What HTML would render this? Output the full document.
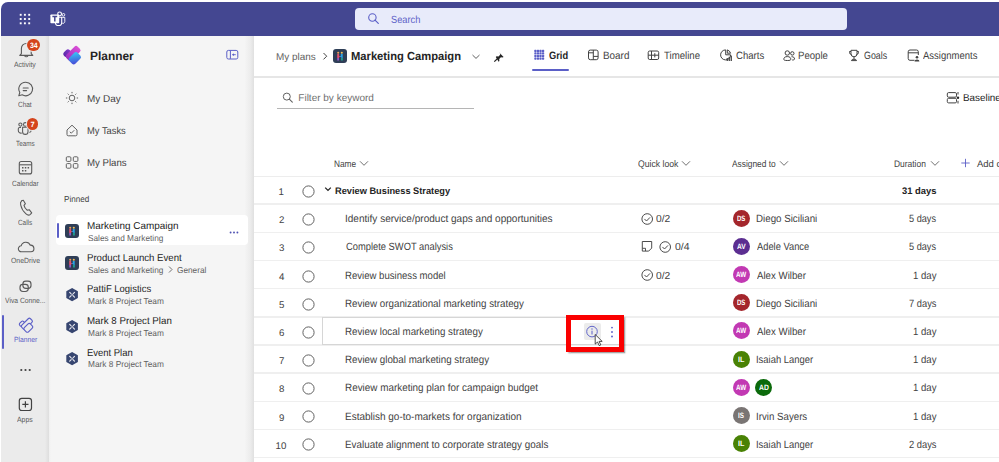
<!DOCTYPE html>
<html><head><meta charset="utf-8"><style>
html,body{margin:0;padding:0;}
body{width:999px;height:462px;position:relative;overflow:hidden;background:#ffffff;font-family:"Liberation Sans",sans-serif;}
.t{position:absolute;white-space:nowrap;line-height:1;transform-origin:0 0;text-rendering:geometricPrecision;}
svg{overflow:visible;}
</style></head><body>
<div style="position:absolute;left:1px;top:2px;width:998px;height:33.5px;background:#444791;border-top-left-radius:7px;"></div>
<svg style="position:absolute;left:0px;top:0px;" width="40" height="36" viewBox="0 0 40 36"><rect x="19.75" y="13.85" width="1.9" height="1.9" fill="#fff"/><rect x="19.75" y="18.05" width="1.9" height="1.9" fill="#fff"/><rect x="19.75" y="22.35" width="1.9" height="1.9" fill="#fff"/><rect x="23.95" y="13.85" width="1.9" height="1.9" fill="#fff"/><rect x="23.95" y="18.05" width="1.9" height="1.9" fill="#fff"/><rect x="23.95" y="22.35" width="1.9" height="1.9" fill="#fff"/><rect x="28.25" y="13.85" width="1.9" height="1.9" fill="#fff"/><rect x="28.25" y="18.05" width="1.9" height="1.9" fill="#fff"/><rect x="28.25" y="22.35" width="1.9" height="1.9" fill="#fff"/></svg>
<svg style="position:absolute;left:0px;top:0px;" width="70" height="36" viewBox="0 0 70 36"><circle cx="59.6" cy="13.9" r="1.9" fill="none" stroke="#fff" stroke-width="1.1"/><circle cx="63.5" cy="14.8" r="1.3" fill="none" stroke="#fff" stroke-width="0.9"/><path d="M62.2 17.4h2.6v4.2a1.8 1.8 0 0 1-2.6 1.6" fill="none" stroke="#fff" stroke-width="0.9"/><path d="M55.4 17.2h6.3v5.2a3.15 3.15 0 0 1-6.3 0z" fill="none" stroke="#fff" stroke-width="1.1"/><rect x="50.4" y="14.4" width="8.8" height="8.8" rx="0.8" fill="#fff"/><path d="M52.4 16.6h4.8M54.8 16.6v5" stroke="#444791" stroke-width="1.5"/></svg>
<div style="position:absolute;left:355px;top:7.5px;width:492px;height:22.5px;background:#e8ebfa;border-radius:4px;"></div>
<svg style="position:absolute;left:360px;top:8px;" width="30" height="22" viewBox="0 0 30 22"><circle cx="12.4" cy="9.5" r="3.7" fill="none" stroke="#5b5fc7" stroke-width="1.1"/><path d="M15 12.1l3.3 3.3" stroke="#5b5fc7" stroke-width="1.2" stroke-linecap="round"/></svg>
<div class="t" style="left:391.00px;top:15.88px;font-size:10.3px;color:#5b5fc7;transform:scaleX(0.900);">Search</div>
<div style="position:absolute;left:1px;top:35.5px;width:47px;height:427px;background:#ebebeb;"></div>
<div style="position:absolute;left:44.5px;top:35.5px;width:4px;height:427px;background:linear-gradient(90deg,#ebebeb,#dedede);"></div>
<div style="position:absolute;left:48.5px;top:35.5px;width:2.5px;height:427px;background:linear-gradient(90deg,#f0f0f0,#f5f5f5);"></div>
<div style="position:absolute;left:51px;top:35.5px;width:194px;height:427px;background:#f5f5f5;"></div>
<div style="position:absolute;left:245px;top:35.5px;width:9px;height:427px;background:linear-gradient(90deg,#f4f4f4,#ececec 60%,#e0e0e0);"></div>
<div style="position:absolute;left:254px;top:35.5px;width:745px;height:427px;background:#ffffff;"></div>
<svg style="position:absolute;left:14px;top:38px;" width="24" height="22" viewBox="0 0 24 22"><path d="M7.4 15.6V10.4a4.9 4.9 0 0 1 9.8 0v5.2l1.6 1.8H5.8z" fill="none" stroke="#5a5a5a" stroke-width="1.1" stroke-linejoin="round"/><path d="M10.6 17.6a1.8 1.8 0 0 0 3.4 0" fill="none" stroke="#5a5a5a" stroke-width="1.1"/></svg>
<div style="position:absolute;left:26.9px;top:39.4px;width:13.3px;height:11.8px;border-radius:6px;background:#d4441c;box-shadow:0 0 0 1px #ebebeb;"></div>
<div class="t" style="left:29.50px;top:42.40px;font-size:7.8px;color:#fff;font-weight:bold;transform:scaleX(0.889);">34</div>
<div class="t" style="left:14.20px;top:60.95px;font-size:7.5px;color:#5a5a5a;transform:scaleX(0.917);">Activity</div>
<svg style="position:absolute;left:14px;top:78px;" width="24" height="22" viewBox="0 0 24 22"><path d="M11.8 4.2a6.8 6.8 0 1 1-3.6 12.6l-3.4 1 1-3.3A6.8 6.8 0 0 1 11.8 4.2z" fill="none" stroke="#5a5a5a" stroke-width="1.1" stroke-linejoin="round"/><path d="M9.2 10h5M9.2 12.6h3.4" stroke="#5a5a5a" stroke-width="1.1" stroke-linecap="round"/></svg>
<div class="t" style="left:18.30px;top:101.05px;font-size:7.5px;color:#5a5a5a;transform:scaleX(0.863);">Chat</div>
<svg style="position:absolute;left:14px;top:115px;" width="24" height="22" viewBox="0 0 24 22"><g fill="none" stroke="#5a5a5a" stroke-width="1.05"><circle cx="6.4" cy="9.6" r="1.6"/><circle cx="11.3" cy="9.4" r="1.8"/><path d="M8.6 12.3h5.4v4.4a2.7 2.7 0 0 1-5.4 0z"/><path d="M7 12.4H5.6a1.3 1.3 0 0 0-1.3 1.3v1.8a2.6 2.6 0 0 0 3.4 2.5"/><path d="M15.4 17.6a2.4 2.4 0 0 0 1.8-2.3v-1.6"/></g></svg>
<div style="position:absolute;left:26.75px;top:118.25px;width:11.5px;height:11.5px;border-radius:50%;background:#d4441c;box-shadow:0 0 0 1px #ebebeb;"></div>
<div class="t" style="left:30.60px;top:120.85px;font-size:7.5px;color:#fff;font-weight:bold;">7</div>
<div class="t" style="left:15.90px;top:140.05px;font-size:7.5px;color:#5a5a5a;transform:scaleX(0.845);">Teams</div>
<svg style="position:absolute;left:14px;top:158px;" width="24" height="22" viewBox="0 0 24 22"><rect x="5.3" y="3.5" width="12.4" height="12.4" rx="2" fill="none" stroke="#5a5a5a" stroke-width="1.1"/><path d="M5.5 6.8h12" stroke="#5a5a5a" stroke-width="1.1"/><g fill="#5a5a5a"><rect x="8" y="9" width="1.5" height="1.5"/><rect x="10.8" y="9" width="1.5" height="1.5"/><rect x="13.6" y="9" width="1.5" height="1.5"/><rect x="8" y="12" width="1.5" height="1.5"/><rect x="10.8" y="12" width="1.5" height="1.5"/></g></svg>
<div class="t" style="left:11.60px;top:180.15px;font-size:7.5px;color:#5a5a5a;transform:scaleX(0.877);">Calendar</div>
<svg style="position:absolute;left:14px;top:198px;" width="24" height="22" viewBox="0 0 24 22"><path d="M7.5 2.8l1.8-.6 2.1 3.5-1.4 1.6c.4 1.8 1.7 3.8 3.3 5l1.9-.6 2.5 3.2-1.3 1.4c-1.2 1.1-3 .8-4.4-.4-2.7-2.4-4.6-5.6-5.3-8.9-.4-1.8.1-3.4.8-3.8z" fill="none" stroke="#5a5a5a" stroke-width="1.1" stroke-linejoin="round"/></svg>
<div class="t" style="left:17.95px;top:219.35px;font-size:7.5px;color:#5a5a5a;transform:scaleX(0.853);">Calls</div>
<svg style="position:absolute;left:14px;top:238px;" width="24" height="22" viewBox="0 0 24 22"><path d="M7.5 13.8a3 3 0 0 1-.3-6 4.8 4.8 0 0 1 9.1-.6 3.3 3.3 0 0 1 .6 6.6z" fill="none" stroke="#5a5a5a" stroke-width="1.1" stroke-linejoin="round"/></svg>
<div class="t" style="left:10.50px;top:257.05px;font-size:7.5px;color:#5a5a5a;transform:scaleX(0.919);">OneDrive</div>
<svg style="position:absolute;left:13px;top:275px;" width="25" height="22" viewBox="0 0 25 22"><g fill="none" stroke="#5a5a5a" stroke-width="1.15"><rect x="9.9" y="6.1" width="8.1" height="7.3" rx="2.9"/><rect x="7" y="9.4" width="8.3" height="7.1" rx="2.9"/></g></svg>
<div class="t" style="left:5.35px;top:297.35px;font-size:7.5px;color:#5a5a5a;transform:scaleX(0.902);">Viva Conne...</div>
<div style="position:absolute;left:2.4px;top:314.5px;width:2px;height:34px;background:#5b5fc7;border-radius:1px;"></div>
<svg style="position:absolute;left:0px;top:300px;" width="50" height="50" viewBox="0 0 50 50"><g transform="translate(17.9 24.3) scale(0.88) matrix(0.7071,-0.7071,0.7071,0.7071,0,0)"><rect x="0.65" y="0.65" width="6.2" height="4.2" rx="1.8" fill="#ebebeb" stroke="#5b5fc7" stroke-width="1.3"/><rect x="0.65" y="3.85" width="13.899999999999999" height="5.9" rx="1.8" fill="#ebebeb" stroke="#5b5fc7" stroke-width="1.3"/><rect x="0.65" y="7.8500000000000005" width="9.7" height="6.7" rx="1.8" fill="#ebebeb" stroke="#5b5fc7" stroke-width="1.3"/></g></svg>
<div class="t" style="left:13.50px;top:336.45px;font-size:7.5px;color:#5b5fc7;transform:scaleX(0.900);">Planner</div>
<svg style="position:absolute;left:14px;top:362px;" width="24" height="16" viewBox="0 0 24 16"><circle cx="7.3" cy="8" r="1.1" fill="#424242"/><circle cx="11.5" cy="8" r="1.1" fill="#424242"/><circle cx="15.7" cy="8" r="1.1" fill="#424242"/></svg>
<svg style="position:absolute;left:14px;top:393px;" width="24" height="22" viewBox="0 0 24 22"><rect x="5.3" y="5.3" width="12.2" height="12.2" rx="2.5" fill="none" stroke="#424242" stroke-width="1.2"/><path d="M11.4 8.3v6.2M8.3 11.4h6.2" stroke="#424242" stroke-width="1.2"/></svg>
<div class="t" style="left:17.40px;top:416.45px;font-size:7.5px;color:#5a5a5a;transform:scaleX(0.918);">Apps</div>
<svg style="position:absolute;left:0px;top:0px;" width="100" height="70" viewBox="0 0 100 70"><defs><linearGradient id="lg1" x1="0" y1="0" x2="1" y2="0"><stop offset="0" stop-color="#5a2aa6"/><stop offset="1" stop-color="#8238c9"/></linearGradient><linearGradient id="lg2" x1="0" y1="0" x2="1" y2="0"><stop offset="0" stop-color="#9a2fc0"/><stop offset="1" stop-color="#db4fd6"/></linearGradient><linearGradient id="lg3" x1="0" y1="1" x2="1" y2="0"><stop offset="0" stop-color="#4a3fd6"/><stop offset="1" stop-color="#34d0f6"/></linearGradient></defs><g transform="translate(62.3 54.0) scale(1.06) matrix(0.7071,-0.7071,0.7071,0.7071,0,0)"><rect x="0" y="0" width="7.5" height="5.5" rx="2.2" fill="url(#lg1)"/><rect x="0" y="3.2" width="15.2" height="7.2" rx="2.2" fill="url(#lg2)"/><rect x="0" y="7.2" width="11" height="8" rx="2.2" fill="url(#lg3)"/></g></svg>
<div class="t" style="left:89.70px;top:50.34px;font-size:12px;color:#242424;font-weight:bold;transform:scaleX(0.993);">Planner</div>
<svg style="position:absolute;left:224px;top:47px;" width="16" height="14" viewBox="0 0 16 14"><rect x="2.8" y="3.4" width="11" height="8.6" rx="1.6" fill="none" stroke="#5b5fc7" stroke-width="1"/><path d="M6.4 3.6v8.2" stroke="#5b5fc7" stroke-width="1"/><path d="M8.2 7.7h3.6" stroke="#5b5fc7" stroke-width="0.9"/><path d="M10 6.3l-1.8 1.4 1.8 1.4z" fill="#5b5fc7"/></svg>
<svg style="position:absolute;left:64px;top:90px;" width="16" height="16" viewBox="0 0 16 16"><circle cx="8" cy="8" r="2.8" fill="none" stroke="#616161" stroke-width="1"/><g stroke="#616161" stroke-width="1" stroke-linecap="round"><path d="M8 2.3v.6M8 13.1v.6M2.3 8h.6M13.1 8h.6M4 4l.4.4M11.6 11.6l.4.4M4 12l.4-.4M11.6 4.4l.4-.4"/></g></svg>
<div class="t" style="left:86.81px;top:94.73px;font-size:10px;color:#424242;transform:scaleX(0.994);">My Day</div>
<svg style="position:absolute;left:64px;top:122px;" width="16" height="16" viewBox="0 0 16 16"><path d="M3 8L8 3.2 13 8v4.5a1.3 1.3 0 0 1-1.3 1.3H4.3A1.3 1.3 0 0 1 3 12.5z" fill="none" stroke="#616161" stroke-width="1" stroke-linejoin="round"/><path d="M5.8 9.8l1.5 1.4 3-3" fill="none" stroke="#616161" stroke-width="1"/></svg>
<div class="t" style="left:86.87px;top:126.53px;font-size:10px;color:#424242;transform:scaleX(0.934);">My Tasks</div>
<svg style="position:absolute;left:64px;top:154px;" width="16" height="16" viewBox="0 0 16 16"><g fill="none" stroke="#616161" stroke-width="1"><rect x="2.3" y="2.8" width="4.6" height="4.6" rx="1"/><rect x="9.3" y="2.8" width="4.6" height="4.6" rx="1"/><rect x="2.3" y="9.6" width="4.6" height="4.6" rx="1"/><rect x="9.3" y="9.6" width="4.6" height="4.6" rx="1"/></g></svg>
<div class="t" style="left:86.84px;top:158.73px;font-size:10px;color:#424242;transform:scaleX(0.963);">My Plans</div>
<div class="t" style="left:63.80px;top:194.94px;font-size:8.7px;color:#424242;transform:scaleX(0.933);">Pinned</div>
<div style="position:absolute;left:55.5px;top:215.3px;width:192px;height:30.2px;background:#ffffff;border-radius:4px;"></div>
<div style="position:absolute;left:56.6px;top:223px;width:2.3px;height:14.7px;background:#5b5fc7;border-radius:1px;"></div>
<svg style="position:absolute;left:65px;top:224px;" width="14" height="14" viewBox="0 0 14 14"><rect x="0" y="0" width="14" height="14" rx="3" fill="#2f3e57"/><circle cx="5.2" cy="3.7" r="1.05" fill="#f2a15c"/><circle cx="8.8" cy="3.7" r="1.05" fill="#f2c05c"/><path d="M4.2 5.1h1.9v2.1h1.1v0.9H6.1v0.8H4.2z" fill="#e0506e"/><path d="M4.3 8.9h1.6v2.5H4.3z" fill="#9b5cd6"/><path d="M7.8 5.1h1.9v3.8H8.3V8.1H7V7.2h0.8z" fill="#2aa3e6"/><path d="M8.2 8.9h1.5v2.5H8.2z" fill="#1fb59a"/></svg>
<div class="t" style="left:86.81px;top:221.53px;font-size:10px;color:#242424;transform:scaleX(0.992);">Marketing Campaign</div>
<div class="t" style="left:87.80px;top:234.22px;font-size:8.6px;color:#616161;transform:scaleX(0.962);">Sales and Marketing</div>
<svg style="position:absolute;left:226px;top:228px;" width="16" height="8" viewBox="0 0 16 8"><circle cx="4.6" cy="4.5" r="0.95" fill="#4f52b2"/><circle cx="8" cy="4.5" r="0.95" fill="#4f52b2"/><circle cx="11.4" cy="4.5" r="0.95" fill="#4f52b2"/></svg>
<svg style="position:absolute;left:65px;top:256px;" width="14" height="14" viewBox="0 0 14 14"><rect x="0" y="0" width="14" height="14" rx="3" fill="#2f3e57"/><circle cx="5.2" cy="3.7" r="1.05" fill="#f2a15c"/><circle cx="8.8" cy="3.7" r="1.05" fill="#f2c05c"/><path d="M4.2 5.1h1.9v2.1h1.1v0.9H6.1v0.8H4.2z" fill="#e0506e"/><path d="M4.3 8.9h1.6v2.5H4.3z" fill="#9b5cd6"/><path d="M7.8 5.1h1.9v3.8H8.3V8.1H7V7.2h0.8z" fill="#2aa3e6"/><path d="M8.2 8.9h1.5v2.5H8.2z" fill="#1fb59a"/></svg>
<div class="t" style="left:86.84px;top:253.73px;font-size:10px;color:#242424;transform:scaleX(0.962);">Product Launch Event</div>
<div class="t" style="left:87.80px;top:265.92px;font-size:8.6px;color:#616161;transform:scaleX(0.962);">Sales and Marketing</div>
<svg style="position:absolute;left:166px;top:265px;" width="8" height="9" viewBox="0 0 8 9"><path d="M3 1.5l3 3-3 3" fill="none" stroke="#616161" stroke-width="0.9"/></svg>
<div class="t" style="left:176.90px;top:265.92px;font-size:8.6px;color:#616161;transform:scaleX(0.960);">General</div>
<svg style="position:absolute;left:66px;top:287.9px;" width="12" height="13" viewBox="0 0 12 13"><path d="M6.1 0l5.8 3.3v6.6L6.1 13.2 0.3 9.9V3.3z" fill="#374670"/><path d="M3.7 4.3l4.8 4.8M8.5 4.3L3.7 9.1" stroke="#e8e8ee" stroke-width="1.2" stroke-linecap="round"/><circle cx="6.1" cy="6.7" r="1.1" fill="#374670"/><circle cx="6.1" cy="6.7" r="0.7" fill="#fff"/></svg>
<div class="t" style="left:86.95px;top:284.74px;font-size:10px;color:#242424;transform:scaleX(0.946);">PattiF Logistics</div>
<div class="t" style="left:87.90px;top:297.02px;font-size:8.6px;color:#616161;transform:scaleX(0.965);">Mark 8 Project Team</div>
<svg style="position:absolute;left:66px;top:319.7px;" width="12" height="13" viewBox="0 0 12 13"><path d="M6.1 0l5.8 3.3v6.6L6.1 13.2 0.3 9.9V3.3z" fill="#374670"/><path d="M3.7 4.3l4.8 4.8M8.5 4.3L3.7 9.1" stroke="#e8e8ee" stroke-width="1.2" stroke-linecap="round"/><circle cx="6.1" cy="6.7" r="1.1" fill="#374670"/><circle cx="6.1" cy="6.7" r="0.7" fill="#fff"/></svg>
<div class="t" style="left:86.93px;top:316.74px;font-size:10px;color:#242424;transform:scaleX(0.972);">Mark 8 Project Plan</div>
<div class="t" style="left:87.90px;top:328.72px;font-size:8.6px;color:#616161;transform:scaleX(0.965);">Mark 8 Project Team</div>
<svg style="position:absolute;left:66px;top:351.5px;" width="12" height="13" viewBox="0 0 12 13"><path d="M6.1 0l5.8 3.3v6.6L6.1 13.2 0.3 9.9V3.3z" fill="#374670"/><path d="M3.7 4.3l4.8 4.8M8.5 4.3L3.7 9.1" stroke="#e8e8ee" stroke-width="1.2" stroke-linecap="round"/><circle cx="6.1" cy="6.7" r="1.1" fill="#374670"/><circle cx="6.1" cy="6.7" r="0.7" fill="#fff"/></svg>
<div class="t" style="left:86.96px;top:348.74px;font-size:10px;color:#242424;transform:scaleX(0.945);">Event Plan</div>
<div class="t" style="left:87.90px;top:360.42px;font-size:8.6px;color:#616161;transform:scaleX(0.965);">Mark 8 Project Team</div>
<div class="t" style="left:276.01px;top:53.03px;font-size:10px;color:#616161;transform:scaleX(0.992);">My plans</div>
<svg style="position:absolute;left:320px;top:50px;" width="10" height="12" viewBox="0 0 10 12"><path d="M3.5 3l3.2 3.2-3.2 3.2" fill="none" stroke="#424242" stroke-width="1"/></svg>
<svg style="position:absolute;left:333px;top:49px;" width="14" height="14" viewBox="0 0 14 14"><rect x="0" y="0" width="14" height="14" rx="3" fill="#2f3e57"/><circle cx="5.2" cy="3.7" r="1.05" fill="#f2a15c"/><circle cx="8.8" cy="3.7" r="1.05" fill="#f2c05c"/><path d="M4.2 5.1h1.9v2.1h1.1v0.9H6.1v0.8H4.2z" fill="#e0506e"/><path d="M4.3 8.9h1.6v2.5H4.3z" fill="#9b5cd6"/><path d="M7.8 5.1h1.9v3.8H8.3V8.1H7V7.2h0.8z" fill="#2aa3e6"/><path d="M8.2 8.9h1.5v2.5H8.2z" fill="#1fb59a"/></svg>
<div class="t" style="left:351.00px;top:50.60px;font-size:11.7px;color:#242424;font-weight:bold;transform:scaleX(0.957);">Marketing Campaign</div>
<svg style="position:absolute;left:470px;top:51px;" width="12" height="10" viewBox="0 0 12 10"><path d="M2.5 4l3.5 3.4L9.5 4" fill="none" stroke="#616161" stroke-width="1"/></svg>
<svg style="position:absolute;left:493px;top:51px;" width="12" height="11" viewBox="0 0 12 11"><path d="M6.2 1.5l4.4 4.4-1.1.6-1.6-.2-1.7 1.7.2 1.9-.8.8L2.8 6 3.6 5.2l1.9.2 1.7-1.7-.2-1.6z" fill="#242424"/><path d="M4.4 7.7L1.3 10.6" stroke="#242424" stroke-width="1.2"/></svg>
<svg style="position:absolute;left:532px;top:48px;" width="14" height="14" viewBox="0 0 14 14"><g fill="#5b5fc7"><rect x="2.30" y="1.80" width="2.25" height="2.25" rx="0.6"/><rect x="2.30" y="4.35" width="2.25" height="2.25" rx="0.6"/><rect x="2.30" y="6.90" width="2.25" height="2.25" rx="0.6"/><rect x="2.30" y="9.45" width="2.25" height="2.25" rx="0.6"/><rect x="4.85" y="1.80" width="2.25" height="2.25" rx="0.6"/><rect x="4.85" y="4.35" width="2.25" height="2.25" rx="0.6"/><rect x="4.85" y="6.90" width="2.25" height="2.25" rx="0.6"/><rect x="4.85" y="9.45" width="2.25" height="2.25" rx="0.6"/><rect x="7.40" y="1.80" width="2.25" height="2.25" rx="0.6"/><rect x="7.40" y="4.35" width="2.25" height="2.25" rx="0.6"/><rect x="7.40" y="6.90" width="2.25" height="2.25" rx="0.6"/><rect x="7.40" y="9.45" width="2.25" height="2.25" rx="0.6"/><rect x="9.95" y="1.80" width="2.25" height="2.25" rx="0.6"/><rect x="9.95" y="4.35" width="2.25" height="2.25" rx="0.6"/><rect x="9.95" y="6.90" width="2.25" height="2.25" rx="0.6"/><rect x="9.95" y="9.45" width="2.25" height="2.25" rx="0.6"/></g></svg>
<div class="t" style="left:549.20px;top:50.83px;font-size:10.6px;color:#242424;font-weight:bold;transform:scaleX(0.876);">Grid</div>
<div style="position:absolute;left:532px;top:69.3px;width:37px;height:2px;background:#5b5fc7;border-radius:1px;"></div>
<svg style="position:absolute;left:586px;top:48px;" width="14" height="14" viewBox="0 0 14 14"><g fill="none" stroke="#424242" stroke-width="1"><rect x="2.5" y="2.1" width="9.6" height="9.6" rx="1.8"/><path d="M7.3 2.1v9.6M2.5 4.8h4.8M7.3 8.4h4.8"/></g></svg>
<div class="t" style="left:603.47px;top:50.83px;font-size:10.6px;color:#424242;transform:scaleX(0.933);">Board</div>
<svg style="position:absolute;left:646px;top:48px;" width="14" height="14" viewBox="0 0 14 14"><g fill="none" stroke="#424242" stroke-width="1"><rect x="2.2" y="3" width="10.5" height="8.5" rx="1.5"/><path d="M2.2 7.2h10.5M5.5 3v8.5M8.8 5.2v4.2"/></g></svg>
<div class="t" style="left:664.30px;top:50.83px;font-size:10.6px;color:#424242;transform:scaleX(0.910);">Timeline</div>
<svg style="position:absolute;left:719px;top:48px;" width="14" height="14" viewBox="0 0 14 14"><g fill="none" stroke="#424242" stroke-width="1"><path d="M11.6 6.8A5 5 0 1 1 6.7 1.9v4.9z"/><path d="M8.3 1.9a5 5 0 0 1 3.3 3.3H8.3z"/></g><g fill="#424242"><rect x="7.6" y="10" width="1.3" height="3"/><rect x="9.6" y="8.8" width="1.3" height="4.2"/><rect x="11.6" y="7.6" width="1.3" height="5.4"/></g></svg>
<div class="t" style="left:735.60px;top:50.83px;font-size:10.6px;color:#424242;transform:scaleX(0.903);">Charts</div>
<svg style="position:absolute;left:782px;top:48px;" width="14" height="14" viewBox="0 0 14 14"><g fill="none" stroke="#424242" stroke-width="1"><circle cx="5.3" cy="5" r="2.2"/><circle cx="10.3" cy="5.4" r="1.7"/><path d="M1.8 11.3c0-1.6 1-2.7 3.5-2.7s3.5 1.1 3.5 2.7c0 .8-.8 1.2-3.5 1.2s-3.5-.4-3.5-1.2z"/><path d="M9.5 8.7c2 0 3 .8 3 2.2 0 .8-.7 1.1-2.3 1.1"/></g></svg>
<div class="t" style="left:798.09px;top:50.83px;font-size:10.6px;color:#424242;transform:scaleX(0.906);">People</div>
<svg style="position:absolute;left:847px;top:48px;" width="14" height="14" viewBox="0 0 14 14"><g fill="none" stroke="#424242" stroke-width="1"><path d="M4 2.3h6v3.5a3 3 0 0 1-6 0z"/><path d="M4 3.5H2.5v.8A2 2 0 0 0 4.3 6.4M10 3.5h1.5v.8a2 2 0 0 1-1.8 2.1"/><path d="M7 8.8v2.5"/><path d="M4.5 12.6c0-1 1-1.3 2.5-1.3s2.5.3 2.5 1.3z"/></g></svg>
<div class="t" style="left:863.60px;top:50.83px;font-size:10.6px;color:#424242;transform:scaleX(0.836);">Goals</div>
<svg style="position:absolute;left:906px;top:48px;" width="14" height="14" viewBox="0 0 14 14"><g fill="none" stroke="#424242" stroke-width="1"><path d="M8.5 12.3H4a1.8 1.8 0 0 1-1.8-1.8V3.8A1.8 1.8 0 0 1 4 2h6.5a1.8 1.8 0 0 1 1.8 1.8V7"/><path d="M2.2 4.8h10.1"/></g><circle cx="11" cy="9.2" r="1.3" fill="#424242"/><path d="M8.6 13.4c0-1.3 1-2 2.4-2s2.4.7 2.4 2z" fill="#424242"/></svg>
<div class="t" style="left:923.00px;top:50.83px;font-size:10.6px;color:#424242;transform:scaleX(0.897);">Assignments</div>
<div style="position:absolute;left:254px;top:76px;width:745px;height:2px;background:#e6e6e6;"></div>
<svg style="position:absolute;left:280px;top:90px;" width="14" height="14" viewBox="0 0 14 14"><circle cx="6.8" cy="6.6" r="3.5" fill="none" stroke="#616161" stroke-width="1"/><path d="M9.3 9.1l3 3" stroke="#616161" stroke-width="1.1" stroke-linecap="round"/></svg>
<div class="t" style="left:298.30px;top:93.73px;font-size:10px;color:#707070;">Filter by keyword</div>
<div style="position:absolute;left:276.6px;top:107.5px;width:197px;height:1.5px;background:#b5b5b5;"></div>
<svg style="position:absolute;left:945px;top:90px;" width="16" height="16" viewBox="0 0 16 16"><g fill="none" stroke="#424242" stroke-width="1"><rect x="2.3" y="2.6" width="9.2" height="4.6" rx="1.3"/><rect x="2.3" y="8.3" width="9.2" height="4.6" rx="1.3"/><path d="M13 2v2.5M13 10.8v2.7"/></g><circle cx="13" cy="7.7" r="1.2" fill="#242424"/></svg>
<div class="t" style="left:963.21px;top:93.83px;font-size:10px;color:#242424;transform:scaleX(0.986);">Baseline</div>
<div class="t" style="left:334.00px;top:160.26px;font-size:9.5px;color:#424242;transform:scaleX(0.872);">Name</div>
<svg style="position:absolute;left:358.5px;top:159.5px;" width="10" height="7" viewBox="0 0 10 7"><path d="M1 1.3l4 4 4-4" fill="none" stroke="#616161" stroke-width="0.9"/></svg>
<div class="t" style="left:637.70px;top:160.26px;font-size:9.5px;color:#424242;transform:scaleX(0.909);">Quick look</div>
<svg style="position:absolute;left:680.5px;top:159.5px;" width="10" height="7" viewBox="0 0 10 7"><path d="M1 1.3l4 4 4-4" fill="none" stroke="#616161" stroke-width="0.9"/></svg>
<div class="t" style="left:732.00px;top:160.26px;font-size:9.5px;color:#424242;transform:scaleX(0.880);">Assigned to</div>
<svg style="position:absolute;left:778.5px;top:159.5px;" width="10" height="7" viewBox="0 0 10 7"><path d="M1 1.3l4 4 4-4" fill="none" stroke="#616161" stroke-width="0.9"/></svg>
<div class="t" style="left:894.00px;top:160.26px;font-size:9.5px;color:#424242;transform:scaleX(0.886);">Duration</div>
<svg style="position:absolute;left:929.5px;top:159.5px;" width="10" height="7" viewBox="0 0 10 7"><path d="M1 1.3l4 4 4-4" fill="none" stroke="#616161" stroke-width="0.9"/></svg>
<svg style="position:absolute;left:958px;top:156px;" width="14" height="14" viewBox="0 0 14 14"><path d="M7.5 2.8v8.4M3.3 7h8.4" stroke="#5b5fc7" stroke-width="0.9"/></svg>
<div class="t" style="left:977.00px;top:160.26px;font-size:9.5px;color:#424242;">Add column</div>
<div style="position:absolute;left:254px;top:175.6px;width:745px;height:1.2px;background:#ededed;"></div>
<div style="position:absolute;left:254px;top:203.45px;width:745px;height:1.6px;background:#efefef;"></div>
<div class="t" style="left:278.50px;top:188.09px;font-size:9.7px;color:#424242;">1</div>
<svg style="position:absolute;left:302px;top:185.07px;" width="13" height="13" viewBox="0 0 13 13"><circle cx="6.5" cy="6.5" r="5.6" fill="none" stroke="#616161" stroke-width="1"/></svg>
<svg style="position:absolute;left:323px;top:185.475px;" width="10" height="8" viewBox="0 0 10 8"><path d="M2.2 2.6l2.8 2.8 2.8-2.8" fill="none" stroke="#242424" stroke-width="1.3"/></svg>
<div class="t" style="left:335.20px;top:187.46px;font-size:9.5px;color:#242424;font-weight:bold;transform:scaleX(0.973);">Review Business Strategy</div>
<div class="t" style="left:901.90px;top:187.46px;font-size:9.5px;color:#242424;font-weight:bold;transform:scaleX(0.991);">31 days</div>
<div style="position:absolute;left:254px;top:231.6px;width:745px;height:1.6px;background:#efefef;"></div>
<div class="t" style="left:279.00px;top:216.09px;font-size:9.7px;color:#424242;">2</div>
<svg style="position:absolute;left:302px;top:213.22px;" width="13" height="13" viewBox="0 0 13 13"><circle cx="6.5" cy="6.5" r="5.6" fill="none" stroke="#616161" stroke-width="1"/></svg>
<div class="t" style="left:344.74px;top:213.91px;font-size:10.5px;color:#424242;transform:scaleX(0.956);">Identify service/product gaps and opportunities</div>
<div class="t" style="left:909.40px;top:213.91px;font-size:10.5px;color:#424242;transform:scaleX(0.874);">5 days</div>
<svg style="position:absolute;left:640.8px;top:212.52499999999998px;" width="13" height="12" viewBox="0 0 13 12"><circle cx="6.2" cy="6" r="5.3" fill="none" stroke="#424242" stroke-width="0.95"/><path d="M3.7 6.2l1.8 1.8 3.2-3.3" fill="none" stroke="#424242" stroke-width="0.95" stroke-linecap="round" stroke-linejoin="round"/></svg>
<div class="t" style="left:656.40px;top:214.87px;font-size:10.2px;color:#424242;transform:scaleX(1.007);">0/2</div>
<div style="position:absolute;left:732.50px;top:209.82px;width:17px;height:17px;border-radius:50%;background:#a4262c;"></div>
<div class="t" style="left:736.75px;top:214.82px;font-size:7.8px;color:#fff;font-weight:bold;transform:scaleX(0.773);">DS</div>
<div class="t" style="left:755.97px;top:213.91px;font-size:10.5px;color:#424242;transform:scaleX(0.929);">Diego Siciliani</div>
<div style="position:absolute;left:254px;top:259.75px;width:745px;height:1.6px;background:#efefef;"></div>
<div class="t" style="left:279.00px;top:244.09px;font-size:9.7px;color:#424242;">3</div>
<svg style="position:absolute;left:302px;top:241.37px;" width="13" height="13" viewBox="0 0 13 13"><circle cx="6.5" cy="6.5" r="5.6" fill="none" stroke="#616161" stroke-width="1"/></svg>
<div class="t" style="left:345.70px;top:241.91px;font-size:10.5px;color:#424242;transform:scaleX(0.890);">Complete SWOT analysis</div>
<div class="t" style="left:909.40px;top:241.91px;font-size:10.5px;color:#424242;transform:scaleX(0.874);">5 days</div>
<svg style="position:absolute;left:640px;top:240.47499999999997px;" width="14" height="12" viewBox="0 0 14 12"><path d="M2.3 1.5h9.4v6.6l-3 3H2.3z" fill="none" stroke="#424242" stroke-width="0.95" stroke-linejoin="round"/><path d="M2.5 8.3h3v2.7" fill="none" stroke="#424242" stroke-width="0.9"/></svg>
<svg style="position:absolute;left:659px;top:240.67499999999995px;" width="13" height="12" viewBox="0 0 13 12"><circle cx="6.2" cy="6" r="5.3" fill="none" stroke="#424242" stroke-width="0.95"/><path d="M3.7 6.2l1.8 1.8 3.2-3.3" fill="none" stroke="#424242" stroke-width="0.95" stroke-linecap="round" stroke-linejoin="round"/></svg>
<div class="t" style="left:674.60px;top:242.87px;font-size:10.2px;color:#424242;transform:scaleX(1.029);">0/4</div>
<div style="position:absolute;left:732.50px;top:237.97px;width:17px;height:17px;border-radius:50%;background:#5c2e91;"></div>
<div class="t" style="left:736.75px;top:242.97px;font-size:7.8px;color:#fff;font-weight:bold;transform:scaleX(0.850);">AV</div>
<div class="t" style="left:756.90px;top:241.91px;font-size:10.5px;color:#424242;transform:scaleX(0.888);">Adele Vance</div>
<div style="position:absolute;left:254px;top:287.9px;width:745px;height:1.6px;background:#efefef;"></div>
<div class="t" style="left:279.00px;top:273.09px;font-size:9.7px;color:#424242;">4</div>
<svg style="position:absolute;left:302px;top:269.52px;" width="13" height="13" viewBox="0 0 13 13"><circle cx="6.5" cy="6.5" r="5.6" fill="none" stroke="#616161" stroke-width="1"/></svg>
<div class="t" style="left:344.79px;top:270.91px;font-size:10.5px;color:#424242;transform:scaleX(0.913);">Review business model</div>
<div class="t" style="left:912.68px;top:270.91px;font-size:10.5px;color:#424242;transform:scaleX(0.916);">1 day</div>
<svg style="position:absolute;left:640.8px;top:268.82499999999993px;" width="13" height="12" viewBox="0 0 13 12"><circle cx="6.2" cy="6" r="5.3" fill="none" stroke="#424242" stroke-width="0.95"/><path d="M3.7 6.2l1.8 1.8 3.2-3.3" fill="none" stroke="#424242" stroke-width="0.95" stroke-linecap="round" stroke-linejoin="round"/></svg>
<div class="t" style="left:656.40px;top:271.87px;font-size:10.2px;color:#424242;transform:scaleX(1.007);">0/2</div>
<div style="position:absolute;left:732.50px;top:266.12px;width:17px;height:17px;border-radius:50%;background:#c239b3;"></div>
<div class="t" style="left:735.75px;top:271.12px;font-size:7.8px;color:#fff;font-weight:bold;transform:scaleX(0.808);">AW</div>
<div class="t" style="left:756.90px;top:270.91px;font-size:10.5px;color:#424242;transform:scaleX(0.921);">Alex Wilber</div>
<div style="position:absolute;left:254px;top:316.05px;width:745px;height:1.6px;background:#efefef;"></div>
<div class="t" style="left:279.00px;top:301.09px;font-size:9.7px;color:#424242;">5</div>
<svg style="position:absolute;left:302px;top:297.67px;" width="13" height="13" viewBox="0 0 13 13"><circle cx="6.5" cy="6.5" r="5.6" fill="none" stroke="#616161" stroke-width="1"/></svg>
<div class="t" style="left:344.77px;top:298.91px;font-size:10.5px;color:#424242;transform:scaleX(0.932);">Review organizational marketing strategy</div>
<div class="t" style="left:909.00px;top:298.91px;font-size:10.5px;color:#424242;transform:scaleX(0.887);">7 days</div>
<div style="position:absolute;left:732.50px;top:294.27px;width:17px;height:17px;border-radius:50%;background:#a4262c;"></div>
<div class="t" style="left:736.75px;top:299.27px;font-size:7.8px;color:#fff;font-weight:bold;transform:scaleX(0.773);">DS</div>
<div class="t" style="left:755.97px;top:298.91px;font-size:10.5px;color:#424242;transform:scaleX(0.929);">Diego Siciliani</div>
<div style="position:absolute;left:254px;top:344.2px;width:745px;height:1.6px;background:#efefef;"></div>
<div class="t" style="left:279.00px;top:329.09px;font-size:9.7px;color:#424242;">6</div>
<svg style="position:absolute;left:302px;top:325.82px;" width="13" height="13" viewBox="0 0 13 13"><circle cx="6.5" cy="6.5" r="5.6" fill="none" stroke="#616161" stroke-width="1"/></svg>
<div class="t" style="left:344.77px;top:326.91px;font-size:10.5px;color:#424242;transform:scaleX(0.930);">Review local marketing strategy</div>
<div class="t" style="left:912.68px;top:326.91px;font-size:10.5px;color:#424242;transform:scaleX(0.916);">1 day</div>
<div style="position:absolute;left:732.50px;top:322.43px;width:17px;height:17px;border-radius:50%;background:#c239b3;"></div>
<div class="t" style="left:735.75px;top:327.42px;font-size:7.8px;color:#fff;font-weight:bold;transform:scaleX(0.808);">AW</div>
<div class="t" style="left:756.90px;top:326.91px;font-size:10.5px;color:#424242;transform:scaleX(0.921);">Alex Wilber</div>
<div style="position:absolute;left:254px;top:372.35px;width:745px;height:1.6px;background:#efefef;"></div>
<div class="t" style="left:279.00px;top:357.09px;font-size:9.7px;color:#424242;">7</div>
<svg style="position:absolute;left:302px;top:353.97px;" width="13" height="13" viewBox="0 0 13 13"><circle cx="6.5" cy="6.5" r="5.6" fill="none" stroke="#616161" stroke-width="1"/></svg>
<div class="t" style="left:344.77px;top:354.91px;font-size:10.5px;color:#424242;transform:scaleX(0.932);">Review global marketing strategy</div>
<div class="t" style="left:912.68px;top:354.91px;font-size:10.5px;color:#424242;transform:scaleX(0.916);">1 day</div>
<div style="position:absolute;left:732.50px;top:350.57px;width:17px;height:17px;border-radius:50%;background:#498205;"></div>
<div class="t" style="left:737.75px;top:355.57px;font-size:7.8px;color:#fff;font-weight:bold;transform:scaleX(0.929);">IL</div>
<div class="t" style="left:756.00px;top:354.91px;font-size:10.5px;color:#424242;transform:scaleX(0.898);">Isaiah Langer</div>
<div style="position:absolute;left:254px;top:400.5px;width:745px;height:1.6px;background:#efefef;"></div>
<div class="t" style="left:279.00px;top:385.09px;font-size:9.7px;color:#424242;">8</div>
<svg style="position:absolute;left:302px;top:382.12px;" width="13" height="13" viewBox="0 0 13 13"><circle cx="6.5" cy="6.5" r="5.6" fill="none" stroke="#616161" stroke-width="1"/></svg>
<div class="t" style="left:344.76px;top:382.91px;font-size:10.5px;color:#424242;transform:scaleX(0.942);">Review marketing plan for campaign budget</div>
<div class="t" style="left:912.68px;top:382.91px;font-size:10.5px;color:#424242;transform:scaleX(0.916);">1 day</div>
<div style="position:absolute;left:732.50px;top:378.72px;width:17px;height:17px;border-radius:50%;background:#c239b3;"></div>
<div class="t" style="left:735.75px;top:383.72px;font-size:7.8px;color:#fff;font-weight:bold;transform:scaleX(0.808);">AW</div>
<div style="position:absolute;left:754.90px;top:378.72px;width:17px;height:17px;border-radius:50%;background:#0b6a0b;"></div>
<div class="t" style="left:758.60px;top:383.72px;font-size:7.8px;color:#fff;font-weight:bold;transform:scaleX(0.873);">AD</div>
<div style="position:absolute;left:254px;top:428.65px;width:745px;height:1.6px;background:#efefef;"></div>
<div class="t" style="left:279.00px;top:414.09px;font-size:9.7px;color:#424242;">9</div>
<svg style="position:absolute;left:302px;top:410.27px;" width="13" height="13" viewBox="0 0 13 13"><circle cx="6.5" cy="6.5" r="5.6" fill="none" stroke="#616161" stroke-width="1"/></svg>
<div class="t" style="left:344.75px;top:411.91px;font-size:10.5px;color:#424242;transform:scaleX(0.951);">Establish go-to-markets for organization</div>
<div class="t" style="left:912.68px;top:411.91px;font-size:10.5px;color:#424242;transform:scaleX(0.916);">1 day</div>
<div style="position:absolute;left:732.50px;top:406.87px;width:17px;height:17px;border-radius:50%;background:#7a7574;"></div>
<div class="t" style="left:737.75px;top:411.87px;font-size:7.8px;color:#fff;font-weight:bold;transform:scaleX(0.812);">IS</div>
<div class="t" style="left:755.98px;top:411.91px;font-size:10.5px;color:#424242;transform:scaleX(0.924);">Irvin Sayers</div>
<div style="position:absolute;left:254px;top:456.8px;width:745px;height:1.6px;background:#efefef;"></div>
<div class="t" style="left:275.50px;top:442.09px;font-size:9.7px;color:#424242;">10</div>
<svg style="position:absolute;left:302px;top:438.42px;" width="13" height="13" viewBox="0 0 13 13"><circle cx="6.5" cy="6.5" r="5.6" fill="none" stroke="#616161" stroke-width="1"/></svg>
<div class="t" style="left:344.76px;top:439.91px;font-size:10.5px;color:#424242;transform:scaleX(0.939);">Evaluate alignment to corporate strategy goals</div>
<div class="t" style="left:908.90px;top:439.91px;font-size:10.5px;color:#424242;transform:scaleX(0.890);">2 days</div>
<div style="position:absolute;left:732.50px;top:435.02px;width:17px;height:17px;border-radius:50%;background:#498205;"></div>
<div class="t" style="left:737.75px;top:440.02px;font-size:7.8px;color:#fff;font-weight:bold;transform:scaleX(0.929);">IL</div>
<div class="t" style="left:756.00px;top:439.91px;font-size:10.5px;color:#424242;transform:scaleX(0.898);">Isaiah Langer</div>
<div style="position:absolute;left:321.9px;top:316.85px;width:300px;height:27.85px;border:1px solid #d6d6d6;border-right:none;box-sizing:border-box;"></div>
<div style="position:absolute;left:584.2px;top:322.9px;width:16.6px;height:17px;background:#ebebeb;border-radius:2px;"></div>
<svg style="position:absolute;left:585px;top:325px;" width="14" height="13" viewBox="0 0 14 13"><circle cx="7" cy="6.6" r="5.3" fill="none" stroke="#5b5fc7" stroke-width="0.95"/><path d="M7 5.7v3.8" stroke="#5b5fc7" stroke-width="1"/><circle cx="7" cy="4" r="0.65" fill="#5b5fc7"/></svg>
<svg style="position:absolute;left:608px;top:324px;" width="8" height="16" viewBox="0 0 8 16"><circle cx="4" cy="3.6" r="0.95" fill="#5b5fc7"/><circle cx="4" cy="8" r="0.95" fill="#5b5fc7"/><circle cx="4" cy="12.5" r="0.95" fill="#5b5fc7"/></svg>
<div style="position:absolute;left:566px;top:315px;width:58.3px;height:37px;border:5px solid #fa0000;box-sizing:border-box;box-shadow:1.5px 1.5px 1.5px rgba(0,0,0,0.35);"></div>
<svg style="position:absolute;left:593px;top:333px;" width="12" height="14" viewBox="0 0 12 14"><path d="M2.2 1.5v9.6l2.3-2.1 1.7 3.6 1.6-.7-1.7-3.5h3.1z" fill="#fff" stroke="#222" stroke-width="0.8" stroke-linejoin="round"/></svg>
</body></html>
